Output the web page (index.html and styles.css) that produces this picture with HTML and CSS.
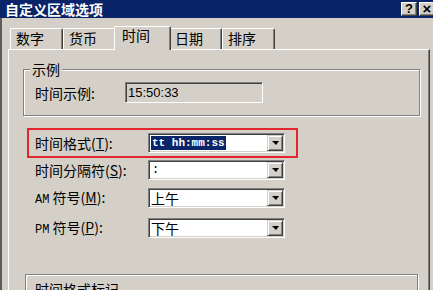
FILE: index.html
```html
<!DOCTYPE html>
<html lang="zh-CN">
<head>
  <meta charset="UTF-8">
  <title>自定义区域选项</title>
  <meta name="viewport" content="width=device-width, initial-scale=1.0">
  <link rel="stylesheet" href="styles.css">
</head>
<body>

<div id="dialog">
  <div id="titleBar">
    <span id="titleText">自定义区域选项</span>
    <div id="captionBtns">
      <span class="capBtn">?</span>
      <span class="capBtn close">×</span>
    </div>
  </div>

  <div id="client">
    <div id="tabs">
      <div class="tab">数字</div>
      <div class="tab">货币</div>
      <div class="tab active">时间</div>
      <div class="tab">日期</div>
      <div class="tab">排序</div>
    </div>

    <div id="tabPanel">
      <div class="group" id="sampleGroup">
        <div class="groupTitle">示例</div>
        <div class="sampleRow">
          <span class="sampleLabel">时间示例:</span>
          <div class="readonlyBox">15:50:33</div>
        </div>
      </div>

      <!-- red marker round the format row -->
      <div id="marker">
        <div class="formRow">
          <span class="formLabel">时间格式(<u>T</u>):</span>
          <div class="combo">
            <span class="comboValue"><span class="selText">tt hh:mm:ss</span></span>
            <span class="dropBtn"><span class="arrow"></span></span>
          </div>
        </div>
      </div>

      <div class="formRow plain" id="sepRow">
        <span class="formLabel">时间分隔符(<u>S</u>):</span>
        <div class="combo">
          <span class="comboValue mono">:</span>
          <span class="dropBtn"><span class="arrow"></span></span>
        </div>
      </div>

      <div class="formRow plain" id="amRow">
        <span class="formLabel"><span class="ampm">AM</span> 符号(<u>M</u>):</span>
        <div class="combo">
          <span class="comboValue">上午</span>
          <span class="dropBtn"><span class="arrow"></span></span>
        </div>
      </div>

      <div class="formRow plain" id="pmRow">
        <span class="formLabel"><span class="ampm">PM</span> 符号(<u>P</u>):</span>
        <div class="combo">
          <span class="comboValue">下午</span>
          <span class="dropBtn"><span class="arrow"></span></span>
        </div>
      </div>

      <div class="group" id="marksGroup">
        <div class="marksTitle">时间格式标记</div>
      </div>
    </div>
  </div>
</div>

</body>
</html>
```

FILE: styles.css
```css
* { margin: 0; padding: 0; box-sizing: border-box; }
html, body { width: 100%; height: 100%; overflow: hidden; }
body {
  background: #d4d0c8;
  font-family: "Noto Sans CJK SC", "Liberation Sans", sans-serif;
  font-size: 14px;
  color: #000;
}

#dialog { width: 440px; height: 290px; background: #d4d0c8; }

/* title bar */
#titleBar {
  height: 18px;
  background: #0a246a;
  display: flex;
  align-items: center;
  justify-content: space-between;
  padding: 0 5px 0 5px;
}
#titleText { color: #fff; font-weight: bold; font-size: 14px; line-height: 18px; }
#captionBtns { display: flex; gap: 2px; }
.capBtn {
  width: 16px;
  height: 14px;
  background: #d4d0c8;
  border: 1px solid;
  border-color: #fff #404040 #404040 #fff;
  box-shadow: inset -1px -1px 0 #808080;
  font: bold 13px/12px "Liberation Sans", sans-serif;
  text-align: center;
}
.capBtn.close { font-size: 15px; }

/* client area */
#client {
  border-left: 2px solid #5c5c5c;
  padding: 8px 0 0 6px;
}

#tabs { display: flex; align-items: flex-start; height: 24px; padding-left: 2px; }
.tab {
  width: 53px;
  height: 21px;
  margin-top: 2px;
  padding: 1px 0 0 5px;
  line-height: 16px;
  border-top: 1px solid #fff;
  border-left: 1px solid #fff;
  border-right: 1px solid #404040;
  border-radius: 2px 2px 0 0;
  box-shadow: inset -1px 0 0 #808080;
  background: #d4d0c8;
}
.tab.active {
  position: relative;
  z-index: 2;
  height: 24px;
  margin: 0 -2px;
  width: 57px;
  padding: 0 0 0 7px;
}

#tabPanel {
  position: relative;
  z-index: 1;
  width: 422px;
  height: 260px;
  margin-top: -1px;
  border-top: 1px solid #fff;
  border-left: 1px solid #fff;
  border-right: 1px solid #404040;
  box-shadow: inset -1px 0 0 #808080;
}

/* etched group frame */
.group {
  border: 1px solid #808080;
  box-shadow: inset 1px 1px 0 #fff, 1px 1px 0 #fff;
}
#sampleGroup {
  margin: 19px 0 0 14px;
  width: 397px;
  padding: 0 0 12px 0;
}
.groupTitle {
  width: fit-content;
  margin: -9px 0 0 6px;
  padding: 0 2px;
  line-height: 16px;
  background: #d4d0c8;
}
.sampleRow { display: flex; align-items: center; margin-top: 5px; padding-left: 11px; }
.sampleLabel { width: 90px; }
.readonlyBox {
  width: 138px;
  height: 21px;
  padding-left: 2px;
  font: 13px/19px "Liberation Sans", sans-serif;
  border: 1px solid;
  border-color: #808080 #fff #fff #808080;
  box-shadow: inset 1px 1px 0 #404040, inset -1px -1px 0 #d4d0c8;
  background: #d4d0c8;
}

#marker {
  width: 271px;
  margin: 12px 0 0 18px;
  border: 2px solid #e3262d;
  padding: 3px 0 3px 6px;
}

.formRow { display: flex; align-items: center; height: 20px; }
.formRow.plain { margin-left: 26px; }
#sepRow { margin-top: 2px; }
#amRow { margin-top: 8px; }
#pmRow { margin-top: 10px; }
.formLabel { width: 113px; line-height: 16px; white-space: nowrap; }
.ampm { font: 12px "Liberation Mono", monospace; }

.combo {
  width: 137px;
  height: 20px;
  display: flex;
  padding: 1px;
  background: #fff;
  border: 1px solid;
  border-color: #808080 #fff #fff #808080;
  box-shadow: inset 1px 1px 0 #404040, inset -1px -1px 0 #d4d0c8;
}
.comboValue { flex: 1; display: flex; align-items: center; padding-left: 1px; line-height: 16px; }
.comboValue.mono { font: 12px "Liberation Mono", monospace; padding-left: 2px; }
.selText {
  background: #0a246a;
  color: #fff;
  font: bold 11px/14px "Liberation Mono", monospace;
  padding: 0 1px;
}
.dropBtn {
  width: 16px;
  height: 16px;
  display: flex;
  align-items: center;
  justify-content: center;
  background: #d4d0c8;
  border: 1px solid;
  border-color: #d4d0c8 #404040 #404040 #d4d0c8;
  box-shadow: inset 1px 1px 0 #fff, inset -1px -1px 0 #808080;
}
.arrow {
  width: 0;
  height: 0;
  border-left: 4px solid transparent;
  border-right: 3px solid transparent;
  border-top: 4px solid #000;
}

#marksGroup {
  width: 393px;
  height: 40px;
  margin: 36px 0 0 16px;
  padding: 6px 0 0 9px;
}
.marksTitle { line-height: 16px; }
```
